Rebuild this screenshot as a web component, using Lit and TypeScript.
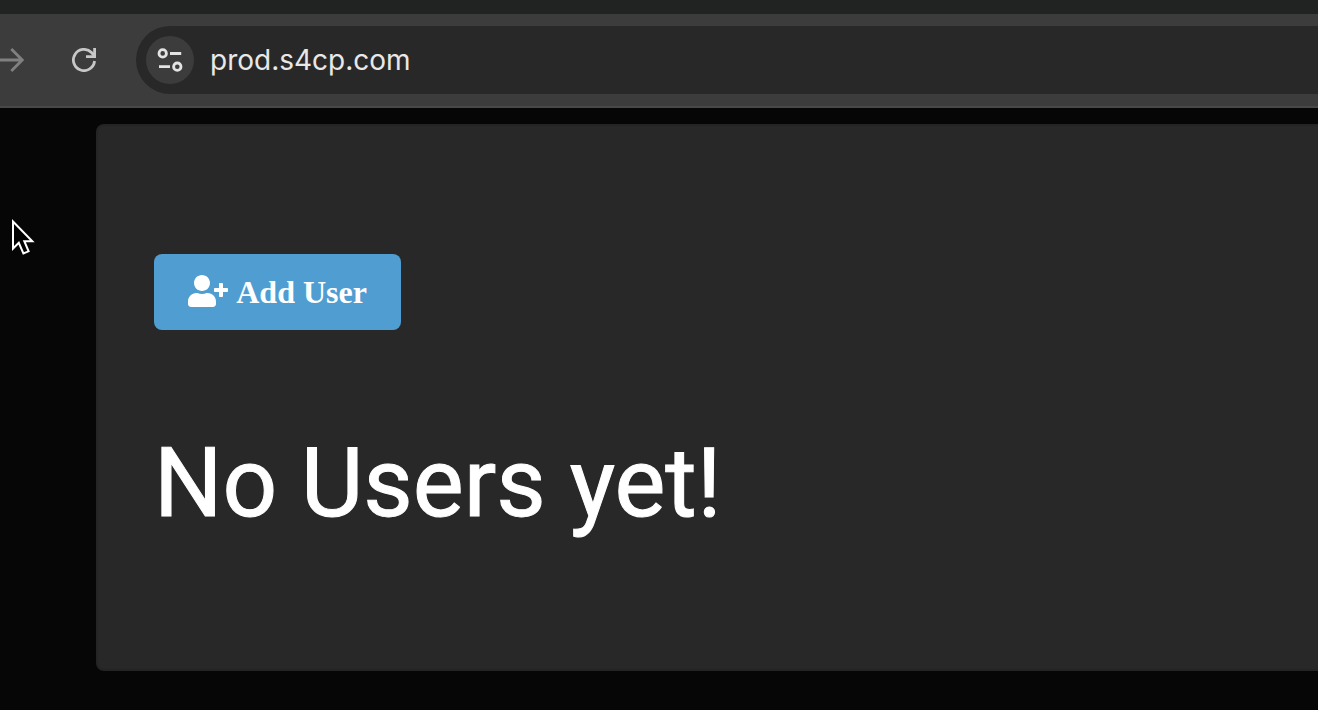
import { LitElement, html, css } from "lit";
import { customElement, property } from "lit/decorators.js";

@customElement("browser-bar")
class BrowserBar extends LitElement {
  @property() address = "";

  static styles = css`
    :host {
      display: block;
      background: #3c3c3c;
      border-top: 14px solid #202322;
      border-bottom: 2px solid #484848;
    }
    .row {
      display: flex;
      align-items: center;
      padding: 12px 0;
    }
    button {
      display: block;
      flex: none;
      margin: 0;
      padding: 0;
      border: 0;
      background: none;
    }
    svg {
      display: block;
    }
    .forward {
      color: #808080;
    }
    .reload {
      margin: 0 40px 0 48px;
      color: #c7c7c7;
    }
    .pill {
      flex: 1;
      display: flex;
      align-items: center;
      gap: 16px;
      height: 68px;
      padding-left: 10px;
      border-radius: 34px 0 0 34px;
      background: #282828;
    }
    .site {
      display: grid;
      place-items: center;
      width: 48px;
      height: 48px;
      border-radius: 50%;
      background: #3c3c3c;
      color: #e3e3e3;
    }
    input {
      flex: 1;
      min-width: 0;
      padding: 0;
      border: 0;
      outline: 0;
      background: none;
      color: #e8e8e8;
      font: 400 28px/40px Inter, sans-serif;
    }
  `;

  render() {
    return html`
      <div class="row">
        <button class="forward" aria-label="Forward">
          <svg width="24" height="24" viewBox="0 0 24 24" fill="none" stroke="currentColor" stroke-width="2.8">
            <path d="M0 12H22M11.3 1L22.2 12L11.3 23" />
          </svg>
        </button>
        <button class="reload" aria-label="Reload">
          <svg width="24" height="24" viewBox="0 0 24 24" fill="none" stroke="currentColor" stroke-width="2.8">
            <path d="M22.550 13A10.600 10.600 0 1 1 19.500 4.500L22.600 8" />
            <path d="M22.600 0V8.600H14" />
          </svg>
        </button>
        <div class="pill">
          <button class="site" aria-label="View site information">
            <svg width="26" height="26" viewBox="0 0 26 26" fill="none" stroke="currentColor" stroke-width="2.8">
              <circle cx="5.7" cy="6.4" r="3.7" />
              <path d="M13 6.500H24.200M2 19.700H13" />
              <circle cx="20.300" cy="19.700" r="3.7" />
            </svg>
          </button>
          <input type="text" aria-label="Address" .value=${this.address} />
        </div>
      </div>
    `;
  }
}

@customElement("user-panel")
class UserPanel extends LitElement {
  static styles = css`
    :host {
      display: block;
      padding: 128px 56px;
      border: 2px solid #242424;
      border-right: 0;
      border-radius: 8px 0 0 8px;
      background: #282828;
      color: #fff;
    }
    button {
      display: block;
      margin: 0;
      padding: 20px 34px;
      border: 0;
      border-radius: 8px;
      background: #509dd2;
      color: #fff;
      font: 700 32px/36px "Liberation Serif", serif;
    }
    svg {
      margin-right: 2px;
      vertical-align: -4px;
    }
    h1 {
      margin: 96px 0 0;
      font: 400 96px/115px Roboto, sans-serif;
      -webkit-text-stroke: 1px #fff;
    }
  `;

  render() {
    return html`
      <button>
        <svg width="40" height="32" viewBox="0 0 640 512" fill="currentColor" aria-hidden="true">
          <path
            d="M624 208h-64v-64c0-8.800-7.200-16-16-16h-32c-8.800 0-16 7.200-16 16v64h-64c-8.800 0-16 7.200-16 16v32c0 8.800 7.200 16 16 16h64v64c0 8.800 7.200 16 16 16h32c8.800 0 16-7.200 16-16v-64h64c8.800 0 16-7.200 16-16v-32c0-8.800-7.200-16-16-16zm-400 48c70.700 0 128-57.300 128-128S294.700 0 224 0 96 57.300 96 128s57.300 128 128 128zm89.600 32h-16.700c-22.200 10.200-46.900 16-72.900 16s-50.600-5.800-72.900-16h-16.700C60.200 288 0 348.200 0 422.400V464c0 26.500 21.500 48 48 48h352c26.500 0 48-21.500 48-48v-41.600c0-74.200-60.200-134.400-134.400-134.400z"
          />
        </svg>
        Add User
      </button>
      <h1>No Users yet!</h1>
    `;
  }
}

@customElement("app-root")
class AppRoot extends LitElement {
  static styles = css`
    :host {
      display: block;
      position: relative;
      min-height: 100vh;
      background: #060606;
    }
    main {
      padding: 16px 0 32px 96px;
    }
    .pointer {
      position: absolute;
      left: 10px;
      top: 216px;
      pointer-events: none;
    }
  `;

  render() {
    return html`
      <browser-bar address="prod.s4cp.com"></browser-bar>
      <main><user-panel></user-panel></main>
      <svg class="pointer" width="28" height="42" viewBox="0 0 28 42" fill="#000" stroke="#fff" stroke-width="2" aria-hidden="true">
        <path d="M3 5.500V32.500L8.800 26.800L13.400 37.500L18.600 35.300L14.300 25.200H22.300Z" />
      </svg>
    `;
  }
}
